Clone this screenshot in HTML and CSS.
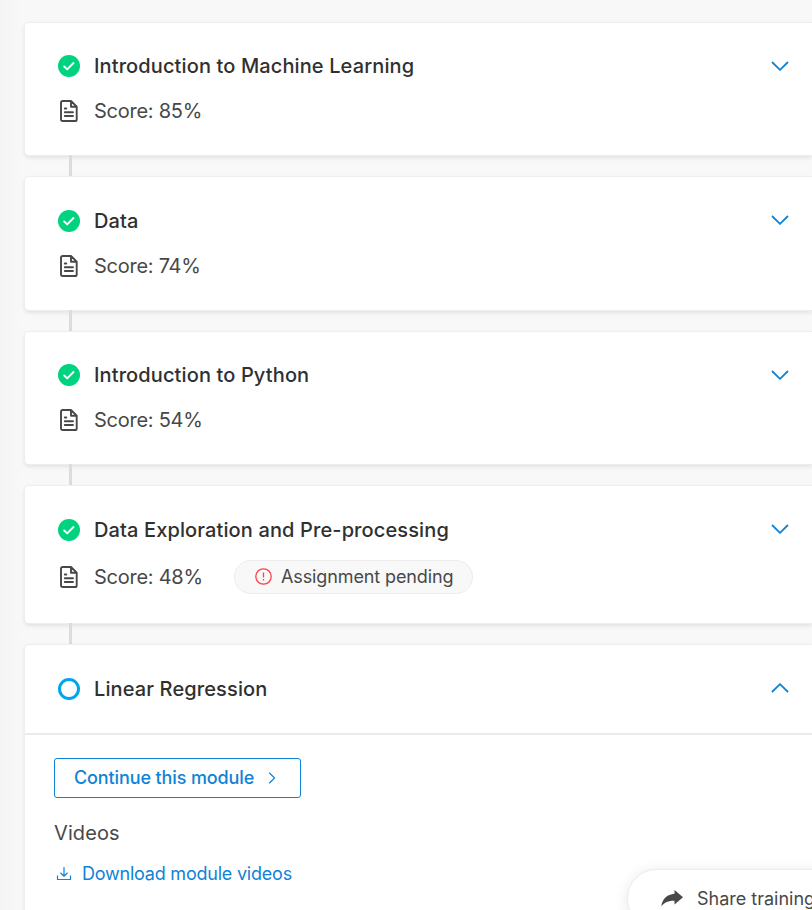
FILE: index.html
```html
<!DOCTYPE html>
<html lang="en">
<head>
<meta charset="utf-8">
<title>Training modules</title>
<link rel="stylesheet" href="styles.css">
</head>
<body>
<svg class="defs" aria-hidden="true">
  <symbol id="done" viewBox="0 0 22 22"><circle cx="11" cy="11" r="11" fill="#00d37f"/><path d="M6.200 11.500l3 2.900 6.300-6.400" fill="none" stroke="#fff" stroke-width="1.900" stroke-linecap="round" stroke-linejoin="round"/></symbol>
  <symbol id="doc" viewBox="0 0 18 22"><path d="M2.600 1h8.400L16.700 6.700V19.400a1.600 1.600 0 0 1-1.600 1.600H2.600A1.600 1.600 0 0 1 1 19.400V2.600A1.600 1.600 0 0 1 2.600 1zM11 1v5.700H16.700M4.800 8.500h1.500M4.800 12.300h8.200M4.800 16h8.200" fill="none" stroke="#484848" stroke-width="1.900" stroke-linecap="round" stroke-linejoin="round"/></symbol>
  <symbol id="chev" viewBox="0 0 18 10"><path d="M1 1l8 7.800L17 1" fill="none" stroke="#0f83d6" stroke-width="1.800"/></symbol>
</svg>
<main class="modules">
  <section class="card">
    <header class="head"><svg class="status"><use href="#done"/></svg><h2>Introduction to Machine Learning</h2><svg class="chevron"><use href="#chev"/></svg></header>
    <div class="score"><svg class="doc"><use href="#doc"/></svg><span>Score: 85%</span></div>
  </section>
  <div class="link"></div>
  <section class="card">
    <header class="head"><svg class="status"><use href="#done"/></svg><h2>Data</h2><svg class="chevron"><use href="#chev"/></svg></header>
    <div class="score"><svg class="doc"><use href="#doc"/></svg><span>Score: 74%</span></div>
  </section>
  <div class="link"></div>
  <section class="card">
    <header class="head"><svg class="status"><use href="#done"/></svg><h2>Introduction to Python</h2><svg class="chevron"><use href="#chev"/></svg></header>
    <div class="score"><svg class="doc"><use href="#doc"/></svg><span>Score: 54%</span></div>
  </section>
  <div class="link"></div>
  <section class="card pending">
    <header class="head"><svg class="status"><use href="#done"/></svg><h2>Data Exploration and Pre-processing</h2><svg class="chevron"><use href="#chev"/></svg></header>
    <div class="score"><svg class="doc"><use href="#doc"/></svg><span class="value">Score: 48%</span>
      <span class="pill"><svg class="alert" viewBox="0 0 17 17"><circle cx="8.500" cy="8.500" r="7.700" fill="none" stroke="#ff3d45" stroke-width="1.300"/><path d="M8.500 4.500v5M8.500 11v1.400" stroke="#ff3d45" stroke-width="1.300"/></svg>Assignment pending</span>
    </div>
  </section>
  <div class="link"></div>
  <section class="card open">
    <header class="head"><span class="ring"></span><h2>Linear Regression</h2><svg class="chevron up"><use href="#chev"/></svg></header>
    <div class="body">
      <a class="button">Continue this module<svg class="next" viewBox="0 0 8 12"><path d="M1.200.800L6.600 6l-5.400 5.200" fill="none" stroke="#0f83d6" stroke-width="1.200"/></svg></a>
      <h3>Videos</h3>
      <a class="download"><svg class="tray" viewBox="0 0 16 15"><path d="M8 1v9M4.500 6.800L8 10.200l3.500-3.400M1.500 9.500v4h13v-4" fill="none" stroke="#0f83d6" stroke-width="1.200" stroke-linejoin="round"/></svg>Download module videos</a>
    </div>
  </section>
</main>
<a class="share"><svg class="arrow" viewBox="0 0 22 17"><path d="M13.500 0L22 7.200l-8.500 7.300v-3.700C8 10.700 3.500 12.300.300 16.500 1.200 9 6 4.300 13.500 3.700z" fill="#484848"/></svg>Share training</a>
</body>
</html>
```

FILE: styles.css
```css
* { box-sizing: border-box; }
body {
  margin: 0;
  height: 910px;
  overflow: hidden;
  position: relative;
  background: linear-gradient(90deg, #f4f4f4, #f8f8f8 22px);
  font-family: Inter, "Liberation Sans", sans-serif;
  color: #484848;
}
.defs { position: absolute; width: 0; height: 0; }
.modules { padding: 22.500px 0 0 25px; }
.card {
  height: 132.500px;
  padding: 28.600px 23.500px 0 33px;
  background: #fff;
  border-radius: 4px 0 0 4px;
  box-shadow: 0 0 0 1px #eee, 0 2px 5px rgba(0, 0, 0, .12);
}
.head { display: flex; align-items: center; height: 30px; }
.status { width: 22px; height: 22px; margin-right: 14px; }
h2 { margin: 0; font-size: 20px; line-height: 30px; font-weight: 500; letter-spacing: .12px; color: #303030; white-space: nowrap; }
.chevron { width: 18px; height: 10px; margin: 0 0 1px auto; }
.up { transform: rotate(180deg); }
.score { display: flex; align-items: center; height: 30px; margin-top: 15px; font-size: 20px; letter-spacing: -.26px; white-space: nowrap; }
.doc { width: 18px; height: 22px; margin: 0 16px 0 2px; }
.link { width: 3px; height: 22px; margin-left: 44px; background: #dcdcdc; }
.pending { height: 137px; }
.pending .score { height: 34px; margin-top: 15px; }
.value { width: 140px; }
.pill {
  display: flex;
  align-items: center;
  width: 239px;
  height: 34px;
  padding-left: 20px;
  border: 1px solid #ececec;
  border-radius: 17px;
  background: #f8f8f8;
  font-size: 18px;
  letter-spacing: -.12px;
}
.alert { width: 17px; height: 17px; margin-right: 9px; }
.open { height: 300px; padding: 0; }
.open .head { height: 90px; padding: 0 23.500px 1px 33px; border-bottom: 2px solid #ebebeb; }
.ring { width: 22px; height: 22px; margin-right: 14px; border: 3px solid #00a5ec; border-radius: 50%; }
.body { padding: 23px 0 0 29px; }
.button {
  display: flex;
  align-items: center;
  width: 247px;
  height: 40px;
  padding: 0 0 1px 19px;
  border: 1px solid #0f83d6;
  border-radius: 3px;
  color: #0f83d6;
  font-size: 18px;
  font-weight: 500;
  letter-spacing: -.12px;
}
.next { width: 8px; height: 12px; margin-left: 14px; }
h3 { margin: 20px 0 0; font-size: 20px; line-height: 30px; font-weight: 400; letter-spacing: .1px; }
.download { display: flex; align-items: center; height: 26px; margin-top: 12px; padding-left: 2px; color: #0f83d6; font-size: 18px; letter-spacing: -.22px; }
.tray { width: 16px; height: 15px; margin-right: 10px; }
.share {
  position: absolute;
  left: 627px;
  top: 869px;
  display: flex;
  align-items: center;
  width: 220px;
  height: 59px;
  padding-left: 33px;
  border: 1px solid #ececec;
  border-radius: 30px;
  background: #fff;
  box-shadow: 0 2px 14px rgba(0, 0, 0, .1);
  font-size: 18px;
  white-space: nowrap;
}
.arrow { width: 22px; height: 17px; margin-right: 14px; }
```
